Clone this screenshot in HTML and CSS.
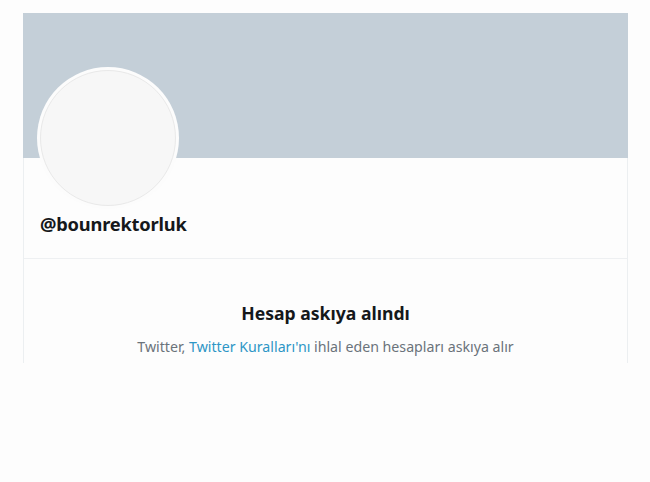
FILE: index.html
```html
<!DOCTYPE html>
<html lang="tr">
<head>
<meta charset="utf-8">
<title>@bounrektorluk</title>
<link rel="stylesheet" href="styles.css">
</head>
<body>
<div class="page">
  <div class="card">
    <div class="banner"></div>
    <div class="profile">
      <div class="avatar"><div class="avatar-inner"></div></div>
      <div class="handle">@bounrektorluk</div>
    </div>
    <div class="notice">
      <div class="title">Hesap askıya alındı</div>
      <div class="desc">Twitter, <span class="link">Twitter Kuralları'nı</span> ihlal eden hesapları askıya alır</div>
    </div>
  </div>
</div>
</body>
</html>
```
FILE: styles.css
```css
html, body {
  margin: 0;
  padding: 0;
  background: #fdfdfd;
  font-family: "Noto Sans", "Open Sans", sans-serif;
}
.page {
  padding: 13px 22px 0 23px;
}
.card {
  width: 605px;
  height: 350px;
  border-left: 1px solid #eceff1;
  border-right: 1px solid #eceff1;
  box-sizing: border-box;
  background: #fdfdfd;
}
.banner {
  height: 145px;
  margin: 0 -1px;
  background: #c4cfd8;
}
.profile {
  display: flex;
  flex-direction: column;
  align-items: flex-start;
  height: 101px;
  box-sizing: border-box;
  border-bottom: 1px solid #eef0f2;
  padding-left: 13px;
}
.avatar {
  width: 142px;
  height: 142px;
  flex: none;
  margin-top: -91px;
  border-radius: 50%;
  background: #fcfcfc;
  box-sizing: border-box;
  padding: 3px;
}
.avatar-inner {
  width: 100%;
  height: 100%;
  border-radius: 50%;
  border: 1px solid #e9e9e9;
  box-sizing: border-box;
  background: #f7f7f7;
}
.handle {
  margin-top: 2px;
  padding-left: 3px;
  font-size: 18.3px;
  font-weight: 700;
  color: #15181b;
  letter-spacing: -0.2px;
}
.notice {
  text-align: center;
  padding-top: 42px;
}
.title {
  font-size: 17.6px;
  font-weight: 700;
  color: #15181b;
}
.desc {
  margin-top: 12px;
  font-size: 14.2px;
  color: #6b737b;
}
.link {
  color: #2d96c6;
}
```
